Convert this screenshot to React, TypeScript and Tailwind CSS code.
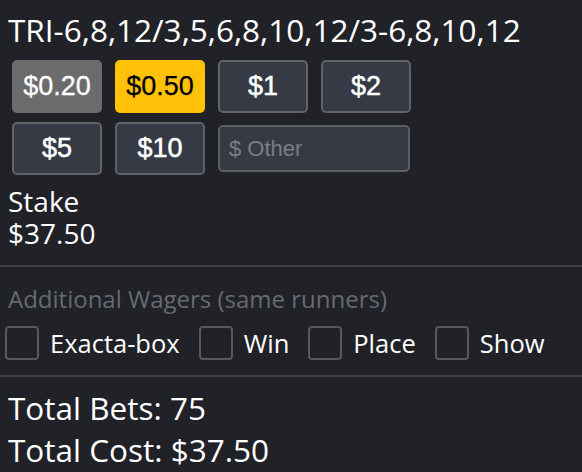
import { useState } from "react"

const extras = ["Exacta-box", "Win", "Place", "Show"]

function AmountButton({ label, selected }: { label: string; selected?: "gray" | "yellow" }) {
  const cls =
    selected === "yellow"
      ? "bg-[#ffc107] border-[#ffc107] text-black [-webkit-text-stroke:0.25px_black]"
      : selected === "gray"
      ? "bg-[#6c6c6c] border-[#6c6c6c] text-white [-webkit-text-stroke:0.3px_white]"
      : "bg-[#363a45] border-[#60636a] text-white [-webkit-text-stroke:0.5px_white]"
  return (
    <button
      className={`h-[53px] w-[90px] rounded-[5px] border-2 text-[27px] ${cls}`}
      style={{ fontFamily: "'Liberation Sans', Arial, sans-serif" }}
    >
      {label}
    </button>
  )
}

export default function App() {
  const [checked, setChecked] = useState<Record<string, boolean>>({})

  return (
    <div
      className="min-h-[472px] w-[582px] bg-[#202228] text-white"
      style={{ fontFamily: "'Open Sans', sans-serif" }}
    >
      <div className="px-[8px] pt-[10px]">
        <div className="text-[31.5px] leading-[40px]">TRI-6,8,12/3,5,6,8,10,12/3-6,8,10,12</div>
        <div className="mt-[10px] flex gap-[13px] pl-[4px]">
          <AmountButton label="$0.20" selected="gray" />
          <AmountButton label="$0.50" selected="yellow" />
          <AmountButton label="$1" />
          <AmountButton label="$2" />
        </div>
        <div className="mt-[9px] flex items-center gap-[13px] pl-[4px]">
          <AmountButton label="$5" />
          <AmountButton label="$10" />
          <input
            placeholder="$ Other"
            className="h-[47px] w-[192px] rounded-[5px] border-2 border-[#5b5e65] bg-[#363a45] px-[9px] text-[22px] text-white placeholder:text-[#7b7e85] outline-none"
            style={{ fontFamily: "'Liberation Sans', Arial, sans-serif" }}
          />
        </div>
        <div className="mt-[10px] text-[28px] leading-[32px]">Stake</div>
        <div className="text-[28px] leading-[32px]">$37.50</div>
      </div>

      <div className="mt-[16px] h-[2px] bg-[#3c3f45]" />

      <div className="px-[5px] pt-[16px]">
        <div className="pl-[3px] text-[24px] leading-[32px] text-[#676a70]">Additional Wagers (same runners)</div>
        <div className="mt-[11px] flex items-center">
          {extras.map((e) => (
            <label key={e} className="mr-[19px] flex cursor-pointer items-center">
              <span
                onClick={() => setChecked({ ...checked, [e]: !checked[e] })}
                className="h-[34px] w-[34px] rounded-[4px] border-2 border-[#55585e]"
              />
              <span className="ml-[11px] text-[25.5px] leading-[34px]">{e}</span>
            </label>
          ))}
        </div>
      </div>

      <div className="mt-[15px] h-[2px] bg-[#3c3f45]" />

      <div className="px-[8px] pt-[10px]">
        <div className="text-[31.5px] leading-[42px]">Total Bets: 75</div>
        <div className="text-[31.5px] leading-[42px]">Total Cost: $37.50</div>
      </div>
    </div>
  )
}
